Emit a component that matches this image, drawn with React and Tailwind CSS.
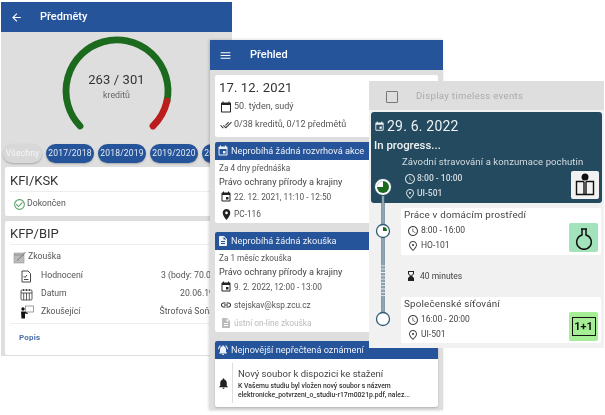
import React from "react";
import {
  MdArrowBack, MdMenu, MdCalendarToday, MdEvent, MdDoneAll, MdPlace, MdDescription, MdLink,
  MdNotifications, MdNotificationsActive, MdAccessTime, MdHourglassBottom, MdOutlinePlace,
  MdCheckCircleOutline,
} from "react-icons/md";

const F = { fontFamily: "Roboto, sans-serif" };

function Chip({ children, off }) {
  return (
    <div className={"shrink-0 h-[19px] rounded-full flex items-center justify-center text-[8.5px] tracking-[0.2px] shadow-[0_1px_2px_rgba(0,0,0,0.25)] " + (off ? "w-[39px] bg-[#d8d8d8] text-[#f6f6f6]" : "w-[48px] bg-[#26549a] text-[#e4ebf5]")}>
      {children}
    </div>
  );
}

function ExamRow({ icon, label, value }) {
  return (
    <div className="flex items-center h-[18px] pl-[10px] pr-[9px] text-[8.7px] text-[#555]">
      <div className="w-[21px] text-[#333]">{icon}</div>
      <div className="flex-1">{label}</div>
      <div>{value}</div>
    </div>
  );
}

const DocIcon = () => (
  <svg width="12" height="13" viewBox="0 0 12 13" fill="none" stroke="#333" strokeWidth="0.9">
    <path d="M2 1 H8 L10.5 3.5 V12 H2 Z" />
    <path d="M3.5 6 L5 7.5 L7 5 M4 9.5 H8.5" />
  </svg>
);
const CalIcon = () => (
  <svg width="13" height="13" viewBox="0 0 13 13" fill="none" stroke="#333" strokeWidth="0.8">
    <rect x="1" y="2" width="11" height="10" rx="1" />
    <path d="M1 5 H12 M3.5 1 V3 M6.5 1 V3 M9.5 1 V3 M3.7 5 V12 M6.5 5 V12 M9.3 5 V12" />
  </svg>
);
const TeacherIcon = () => (
  <svg width="14" height="14" viewBox="0 0 14 14">
    <rect x="5.5" y="1" width="8" height="6" fill="none" stroke="#777" strokeWidth="0.7" />
    <circle cx="3" cy="4" r="1.7" fill="#111" />
    <path d="M1 6.5 H4.5 L8 8 L7.5 9 L5 8.5 V13.5 H1.5 Z" fill="#111" />
  </svg>
);
const PadIcon = () => (
  <svg width="13" height="13" viewBox="0 0 13 13">
    <rect x="1" y="2" width="10" height="10" fill="#bbb" stroke="#999" strokeWidth="0.6" />
    <path d="M1 4 H11" stroke="#888" strokeWidth="0.8" />
    <path d="M4 9.5 L9 5 L12.5 1" stroke="#777" strokeWidth="1" fill="none" />
  </svg>
);

function Phone1() {
  return (
    <div className="absolute left-[1px] top-[2px] w-[231px] h-[354px] bg-[#dedede] overflow-hidden">
      <div className="h-[30px] bg-[#26549a] flex items-center text-white">
        <MdArrowBack className="ml-[9px] text-[13px]" />
        <span className="ml-[17px] text-[11px] font-medium">Předměty</span>
      </div>
      <div className="relative h-[112px] flex flex-col items-center pt-[40px]">
        <svg className="absolute left-0 top-0" width="231" height="112" viewBox="0 -2 231 112">
          <path d="M79 92 A51 51 0 1 1 166 67" fill="none" stroke="#1c6a1e" strokeWidth="6.8" strokeLinecap="round" />
          <path d="M166 67 A51 51 0 0 1 152 92" fill="none" stroke="#bb1c1c" strokeWidth="6.8" strokeLinecap="round" />
        </svg>
        <div className="text-[13px] leading-[15px] text-[#333] tracking-[0.1px]">263 / 301</div>
        <div className="text-[8.8px] leading-[12px] mt-[2px] text-[#666]">kreditů</div>
      </div>
      <div className="flex gap-[4px] pl-[2px]">
        <Chip off>Všechny</Chip>
        <Chip>2017/2018</Chip>
        <Chip>2018/2019</Chip>
        <Chip>2019/2020</Chip>
        <Chip>2020/2021</Chip>
      </div>
      <div className="mt-[4px] mx-[4px] flex flex-col gap-[5px]">
        <div className="h-[49px] bg-white rounded-[2px] px-[5px]">
          <div className="h-[25px] flex items-center pt-[3px] text-[13px] text-[#333] border-b border-[#eee]">KFI/KSK</div>
          <div className="flex items-center h-[24px] pl-[3px] text-[8.7px] text-[#555] gap-[1px]">
            <MdCheckCircleOutline className="text-[13px] text-[#62a872]" />
            Dokončen
          </div>
        </div>
        <div className="h-[134px] bg-white rounded-[2px] px-[5px]">
          <div className="h-[24px] flex items-center pt-[3px] text-[13px] text-[#333] border-b border-[#eee]">KFP/BIP</div>
          <div className="flex items-center h-[20px] mt-[2px] pl-[3px] text-[8.7px] text-[#555] gap-[2px]">
            <PadIcon />
            Zkouška
          </div>
          <ExamRow icon={<DocIcon />} label="Hodnocení" value="3 (body: 70.0)" />
          <ExamRow icon={<CalIcon />} label="Datum" value="20.06.19" />
          <ExamRow icon={<TeacherIcon />} label="Zkoušející" value="Štrofová Soňa" />
          <div className="border-t border-[#eee] mt-[2px] pt-[8px] pl-[9px] text-[8px] font-bold text-[#4a6fae] tracking-[0.2px]">Popis</div>
        </div>
      </div>
    </div>
  );
}

function InfoLine({ icon, children, cls }) {
  return (
    <div className={"flex items-center gap-[1px] " + (cls || "")}>
      <div className="w-[14px] flex justify-center">{icon}</div>
      {children}
    </div>
  );
}

function BlueHead({ icon, children }) {
  return (
    <div className="h-[18px] bg-[#26549a] flex items-center text-[#eef2f8] text-[9.2px] pl-[2px] gap-[2px]">
      {icon}
      {children}
    </div>
  );
}

function Phone2() {
  return (
    <div className="absolute left-[210px] top-[40px] w-[233px] h-[370px] bg-[#dedede] shadow-[-1px_0_3px_rgba(0,0,0,0.2)] overflow-hidden">
      <div className="h-[30px] bg-[#26549a] flex items-center text-white">
        <MdMenu className="ml-[9px] text-[13px]" />
        <span className="ml-[18px] text-[11px] font-medium">Přehled</span>
      </div>
      <div className="mt-[5px] mx-[5px] flex flex-col">
        <div className="h-[62px] bg-white rounded-[2px] pl-[4px] pt-[4px]">
          <div className="text-[13px] leading-[18px] text-[#333] tracking-[0.15px]">17. 12. 2021</div>
          <InfoLine cls="h-[18px] mt-[1px] text-[9px] text-[#555]" icon={<MdCalendarToday className="text-[12px] text-[#222]" />}>50. týden, sudý</InfoLine>
          <InfoLine cls="h-[18px] text-[9px] text-[#555]" icon={<MdDoneAll className="text-[12px] text-[#333]" />}>0/38 kreditů, 0/12 předmětů</InfoLine>
        </div>
        <div className="mt-[5px] h-[81px] bg-white rounded-[2px] overflow-hidden">
          <BlueHead icon={<MdEvent className="text-[12px]" />}>Neprobíhá žádná rozvrhová akce</BlueHead>
          <div className="pl-[4px] pt-[2px] text-[#555]">
            <div className="text-[8.2px] leading-[13px]">Za 4 dny přednáška</div>
            <div className="text-[9.1px] leading-[14px] text-[#444]">Právo ochrany přírody a krajiny</div>
            <InfoLine cls="h-[14px] mt-[1px] text-[8.3px]" icon={<MdEvent className="text-[12px] text-[#222]" />}>22. 12. 2021, 11:10 - 12:50</InfoLine>
            <InfoLine cls="h-[16px] mt-[2px] text-[8.3px]" icon={<MdPlace className="text-[13px] text-[#222]" />}>PC-116</InfoLine>
          </div>
        </div>
        <div className="mt-[9px] h-[100px] bg-white rounded-[2px] overflow-hidden">
          <BlueHead icon={<MdDescription className="text-[12px]" />}>Neprobíhá žádná zkouška</BlueHead>
          <div className="pl-[4px] pt-[2px] text-[#555]">
            <div className="text-[8.2px] leading-[13px]">Za 1 měsíc zkouška</div>
            <div className="text-[9.1px] leading-[14px] text-[#444]">Právo ochrany přírody a krajiny</div>
            <InfoLine cls="h-[14px] mt-[1px] text-[8.3px]" icon={<MdEvent className="text-[12px] text-[#222]" />}>9. 2. 2022, 12:00 - 13:00</InfoLine>
            <InfoLine cls="h-[16px] mt-[3px] text-[8.3px]" icon={<MdLink className="text-[12px] text-[#222]" />}>stejskav@ksp.zcu.cz</InfoLine>
            <InfoLine cls="h-[16px] mt-[2px] text-[8.3px] text-[#bbb]" icon={<MdDescription className="text-[12px] text-[#bbb]" />}>ústní on-line zkouška</InfoLine>
          </div>
        </div>
        <div className="mt-[9px] h-[66px] bg-white rounded-[2px] overflow-hidden shadow-[0_1px_2px_rgba(0,0,0,0.2)]">
          <BlueHead icon={<MdNotificationsActive className="text-[12px]" />}>Nejnovější nepřečtená oznámení</BlueHead>
          <div className="flex h-[48px]">
            <div className="w-[17px] flex items-center justify-center"><MdNotifications className="text-[13px] text-[#222]" /></div>
            <div className="border-l border-[#ddd] my-[4px] pl-[5px] flex flex-col justify-center min-w-0">
              <div className="text-[9.5px] leading-[14px] text-[#444] whitespace-nowrap">Nový soubor k dispozici ke stažení</div>
              <div className="text-[6.8px] leading-[9px] mt-[1px] text-[#333] font-medium whitespace-nowrap">K Vašemu studiu byl vložen nový soubor s názvem<br />elektronicke_potvrzeni_o_studiu-r17m0021p.pdf, nalez...</div>
            </div>
          </div>
        </div>
      </div>
    </div>
  );
}

function Meta({ time, place, dark }) {
  return (
    <div className={"flex flex-col text-[8.5px] " + (dark ? "pl-[2px] text-[#d5dde2] font-medium" : "pl-[3px] text-[#444]")}>
      <div className={"flex items-center h-[15px] " + (dark ? "gap-[1px]" : "gap-[2px]")}><MdAccessTime className="text-[12px]" />{time}</div>
      <div className={"flex items-center h-[15px] " + (dark ? "gap-[1px]" : "gap-[2px]")}><MdOutlinePlace className="text-[12px]" />{place}</div>
    </div>
  );
}

function Phone3() {
  return (
    <div className="absolute left-[369px] top-[81px] w-[235px] h-[267px] bg-[#f1f1f1] overflow-hidden">
      <div className="h-[29px] bg-[#dedede] flex items-center pl-[17px] pt-[2px] gap-[18px] text-[9.5px] text-[#aaa] tracking-[0.35px]">
        <div className="w-[12px] h-[12px] border-[1.5px] border-[#777] rounded-[1px]" />
        Display timeless events
      </div>
      <div className="mt-[2px] mx-[2px] h-[91px] bg-[#244a5f] rounded-[3px] text-white px-[3px] relative">
        <div className="flex items-center gap-[2px] pt-[5px] text-[14px] leading-[18px] text-[#eef2f4] tracking-[0.2px]">
          <MdEvent className="text-[11px]" />29. 6. 2022
        </div>
        <div className="mt-[3px] text-[11.4px] leading-[14px] font-medium text-[#eef2f4]">In progress...</div>
        <div className="pl-[28px] text-[9.5px] leading-[14px] mt-[3px] text-[#d5dde2] whitespace-nowrap tracking-[0.1px]">Závodní stravování a konzumace pochutin</div>
        <div className="pl-[28px] mt-[2px]"><Meta time="8:00 - 10:00" place="UI-501" dark /></div>
        <div className="absolute right-[3px] bottom-[4px] w-[28px] h-[28px] bg-[#f2f2f2] rounded-[2px] flex items-center justify-center">
          <svg width="28" height="28" viewBox="0 0 28 28" fill="none" stroke="#111" strokeWidth="1.4">
            <circle cx="14" cy="6" r="2.8" fill="#111" />
            <path d="M13 10.5 H5.5 V23.5 H22.5 V10.5 H15 M13 10.5 V23.5 M15 10.5 V23.5" />
          </svg>
        </div>
      </div>
      <div className="mt-[5px] ml-[32px] mr-[3px] flex flex-col">
        <div className="h-[47px] bg-white rounded-[2px] relative pl-[3px]">
          <div className="text-[9.8px] leading-[13px] text-[#444] tracking-[0.2px]">Práce v domácím prostředí</div>
          <div className="mt-[2px]"><Meta time="8:00 - 16:00" place="HO-101" /></div>
          <div className="absolute right-[3px] top-[15px] w-[29px] h-[29px] bg-[#a3e3bb] rounded-[2px] flex items-center justify-center">
            <svg width="20" height="24" viewBox="0 0 20 24" fill="none" stroke="#111" strokeWidth="1.5">
              <path d="M7 3 H13 M8 3 V9 A7.3 7.3 0 1 0 12 9 V3" />
            </svg>
          </div>
        </div>
        <div className="h-[42px] flex items-center pl-[4px] text-[8.5px] text-[#444]">
          <MdHourglassBottom className="text-[12px] text-[#222] mr-[3px]" />40 minutes
        </div>
        <div className="h-[46px] bg-white rounded-[2px] relative pl-[3px]">
          <div className="text-[9.8px] leading-[13px] text-[#444] tracking-[0.2px]">Společenské síťování</div>
          <div className="mt-[2px]"><Meta time="16:00 - 20:00" place="UI-501" /></div>
          <div className="absolute right-[3px] top-[15px] w-[29px] h-[29px] bg-[#a6ee96] rounded-[2px] flex items-center justify-center">
            <div className="w-[24px] h-[19px] border-[1.5px] border-[#111] flex items-center justify-center text-[11px] leading-none font-bold text-[#111]">1+1</div>
          </div>
        </div>
      </div>
      <svg className="absolute left-0 top-[96px]" width="30" height="171" viewBox="0 0 30 171">
        <line x1="14" y1="10" x2="14" y2="86" stroke="#3f6579" strokeWidth="3.2" />
        <line x1="14" y1="86" x2="14" y2="120" stroke="#3f6579" strokeWidth="3.2" strokeDasharray="2.5 0.8" />
        <line x1="14" y1="120" x2="14" y2="143" stroke="#3f6579" strokeWidth="3.2" />
        <line x1="14" y1="10" x2="14" y2="143" stroke="#dfe7ea" strokeWidth="1" />
        <circle cx="14" cy="10" r="8.5" fill="#fff" stroke="#244a5f" strokeWidth="1" />
        <circle cx="14" cy="10" r="6" fill="#1c6a1e" />
        <path d="M14 10 L14 4 A6 6 0 0 0 8 10 Z" fill="#fff" />
        <circle cx="14" cy="54" r="6.5" fill="#fff" stroke="#2f5d75" strokeWidth="1.3" />
        <path d="M14 54 L14 50 A4 4 0 0 1 18 54 Z" fill="#1c6a1e" />
        <circle cx="14" cy="142" r="6.5" fill="#fff" stroke="#2f5d75" strokeWidth="1.3" />
      </svg>
    </div>
  );
}

export default function App() {
  return (
    <div className="relative w-[605px] h-[415px] bg-white overflow-hidden blur-[0.35px]" style={F}>
      <Phone1 />
      <Phone2 />
      <Phone3 />
    </div>
  );
}
